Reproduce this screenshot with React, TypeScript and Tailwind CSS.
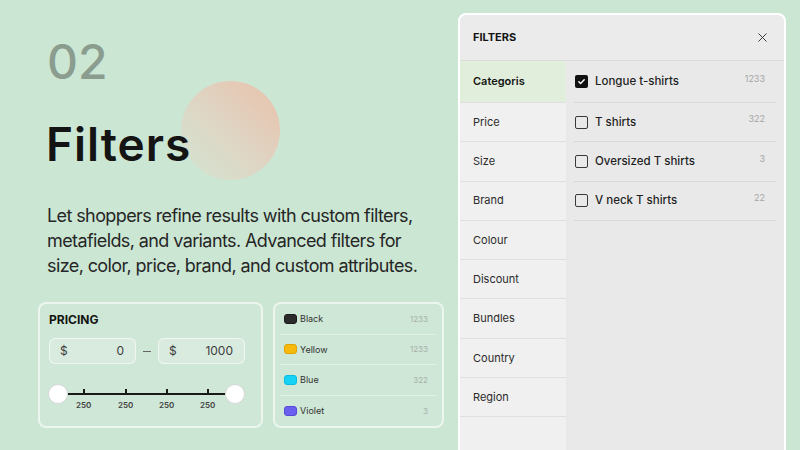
import { X } from 'lucide-react'

const CATEGORIES = ['Categoris', 'Price', 'Size', 'Brand', 'Colour', 'Discount', 'Bundles', 'Country', 'Region']

const OPTIONS = [
  { label: 'Longue t-shirts', count: 1233, checked: true },
  { label: 'T shirts', count: 322, checked: false },
  { label: 'Oversized T shirts', count: 3, checked: false },
  { label: 'V neck T shirts', count: 22, checked: false },
]

const COLOURS = [
  { label: 'Black', count: 1233, swatch: 'bg-[#2b2b2b] border-[#1a1a1a]' },
  { label: 'Yellow', count: 1233, swatch: 'bg-[#f8b90e] border-[#e0a400]' },
  { label: 'Blue', count: 322, swatch: 'bg-[#16d2f4] border-[#0bbbe0]' },
  { label: 'Violet', count: 3, swatch: 'bg-[#6b5ff0] border-[#5548d8]' },
]

function PriceInput({ value }: { value: string }) {
  return (
    <div className="flex h-[26px] w-[87px] items-center justify-between rounded-md border-[1.5px] border-white/60 bg-[#d9ebdf] pl-[10px] pr-[11px] text-[12px] text-[#3d3d3d]">
      <span>$</span>
      <span>{value}</span>
    </div>
  )
}

function Slider() {
  const ticks = [35, 77, 118, 159]
  return (
    <div className="relative -ml-[1px] mt-[20px] h-[34px] w-[197px]">
      <div className="absolute left-[20px] right-[20px] top-[9px] h-[2px] bg-[#1a1a1a]" />
      {ticks.map((x) => (
        <div key={x} className="absolute top-[5px]" style={{ left: x }}>
          <div className="h-[5px] w-[1.5px] bg-[#1a1a1a]" />
          <span className="absolute left-1/2 top-[10px] -translate-x-1/2 text-[8px] font-semibold text-[#444]">250</span>
        </div>
      ))}
      <div className="absolute left-0 top-0 h-[20px] w-[20px] rounded-full border border-[#d8d8d8] bg-white" />
      <div className="absolute right-0 top-0 h-[20px] w-[20px] rounded-full border border-[#d8d8d8] bg-white" />
    </div>
  )
}

export default function App() {
  return (
    <div className="relative flex h-[450px] w-[800px] overflow-hidden bg-[#cce6d4] font-['Inter',sans-serif]">
      {/* decorative orb */}
      <div className="absolute left-[181px] top-[81px] h-[99px] w-[99px] rounded-full bg-linear-to-bl from-[#e9c1aa] via-[#dfd4c3] to-[#d2e6d2]" />

      {/* Left copy */}
      <div className="relative flex w-[458px] flex-col pl-[38px]">
        <div className="mt-[38px] pl-[9px] text-[48px] font-medium leading-none text-[#8a9d8f]">02</div>
        <h1 className="mt-[35px] pl-[8px] text-[46px] font-semibold leading-none tracking-[1px] text-[#141414]">Filters</h1>
        <p className="mt-[36px] w-[400px] pl-[9px] text-[18px] leading-[25px] tracking-[-0.6px] text-[#262626]">
          Let shoppers refine results with custom filters, metafields, and variants. Advanced filters for size, color,
          price, brand, and custom attributes.
        </p>

        <div className="mt-[24px] flex gap-[10px]">
          <section className="h-[126px] w-[225px] rounded-lg border-2 border-white/60 bg-white/5 px-[9px] pt-[8px]">
            <h2 className="text-[12px] font-bold leading-4 text-[#141414]">PRICING</h2>
            <div className="mt-[10px] flex items-center">
              <PriceInput value="0" />
              <span className="mx-[7px] h-[1px] w-[8px] bg-[#666]" />
              <PriceInput value="1000" />
            </div>
            <Slider />
          </section>

          <section className="h-[126px] w-[171px] rounded-lg border-2 border-white/60 bg-white/5 px-[5px]">
            {COLOURS.map((c, i) => (
              <div
                key={c.label}
                className={`flex h-[30.5px] items-center pl-[4px] pr-[9px] ${i < COLOURS.length - 1 ? 'border-b border-white/40' : ''}`}
              >
                <span className={`h-[10px] w-[13px] rounded-[3px] border ${c.swatch}`} />
                <span className="ml-[3px] flex-1 text-[9px] text-[#333]">{c.label}</span>
                <span className="text-[8px] text-[#a8b0aa]">{c.count}</span>
              </div>
            ))}
          </section>
        </div>
      </div>

      {/* Filters panel */}
      <div className="mt-[13px] flex h-[460px] w-[328px] flex-col overflow-hidden rounded-lg border-2 border-white bg-[#ebebeb]">
        <header className="flex h-[46px] shrink-0 items-center justify-between border-b border-[#dcdcdc] pl-[13px] pr-[14px]">
          <span className="text-[11px] font-bold text-[#141414]">FILTERS</span>
          <X size={15} strokeWidth={1.5} className="text-[#333]" />
        </header>
        <div className="flex flex-1">
          <nav className="w-[106px] bg-[#f0f0f0]">
            {CATEGORIES.map((c, i) => (
              <div
                key={c}
                className={`flex items-center border-b border-[#e0e0e0] pl-[13px] text-[11px] ${
                  i === 0 ? 'h-[42px] bg-[#e1eedb] font-semibold text-[#141414]' : 'h-[39.3px] text-[#2b2b2b]'
                }`}
              >
                {c}
              </div>
            ))}
          </nav>
          <div className="flex-1 bg-[#e9e9e9] px-[8px]">
            {OPTIONS.map((o, i) => (
              <div
                key={o.label}
                className={`flex items-center border-b border-[#d9d9d9] pl-[1px] pr-[11px] ${i === 0 ? 'h-[42px]' : 'h-[39.3px]'}`}
              >
                {o.checked ? (
                  <span className="flex h-[13px] w-[13px] items-center justify-center rounded-[2px] bg-[#111]">
                    <svg width="9" height="9" viewBox="0 0 10 10" fill="none">
                      <path d="M2 5.2l2 2L8 3" stroke="white" strokeWidth="1.6" strokeLinecap="round" strokeLinejoin="round" />
                    </svg>
                  </span>
                ) : (
                  <span className="h-[13px] w-[13px] rounded-[2px] border-[1.5px] border-[#3a3a3a]" />
                )}
                <span className="ml-[7px] flex-1 text-[11.5px] font-medium text-[#1f1f1f]">{o.label}</span>
                <span className="-mt-[6px] text-[9px] text-[#a5a5a5]">{o.count}</span>
              </div>
            ))}
          </div>
        </div>
      </div>
    </div>
  )
}
